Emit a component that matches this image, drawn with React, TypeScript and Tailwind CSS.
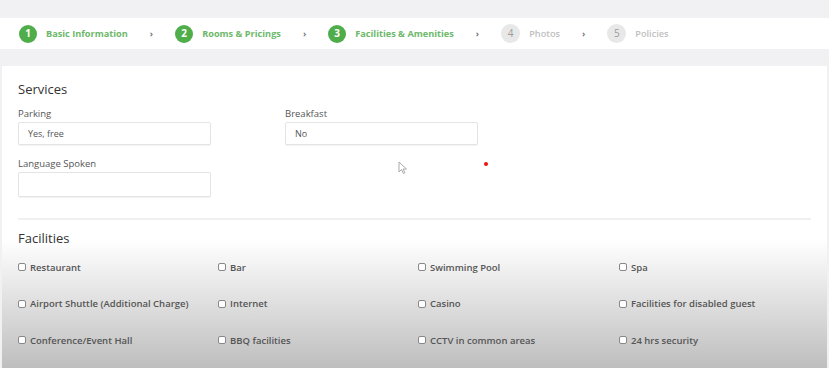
const steps = [
  { n: 1, label: "Basic Information", done: true },
  { n: 2, label: "Rooms & Pricings", done: true },
  { n: 3, label: "Facilities & Amenities", done: true },
  { n: 4, label: "Photos", done: false },
  { n: 5, label: "Policies", done: false },
];

const facilities = [
  "Restaurant",
  "Bar",
  "Swimming Pool",
  "Spa",
  "Airport Shuttle (Additional Charge)",
  "Internet",
  "Casino",
  "Facilities for disabled guest",
  "Conference/Event Hall",
  "BBQ facilities",
  "CCTV in common areas",
  "24 hrs security",
];

function Stepper() {
  return (
    <div className="flex h-[31px] items-center bg-white pl-[19px] font-['Open_Sans',sans-serif]">
      {steps.map((s, i) => (
        <div key={s.n} className="flex items-center">
          <div
            className={
              s.done
                ? "flex h-[18px] w-[18px] items-center justify-center rounded-full bg-[#4fae4a] text-[10px] font-bold text-white"
                : "flex h-[19px] w-[19px] items-center justify-center rounded-full bg-[#e8e8e8] text-[10px] text-[#9c9c9c]"
            }
          >
            {s.n}
          </div>
          <span
            className={
              s.done
                ? "ml-[9px] text-[9.2px] font-bold text-[#6db86a]"
                : "ml-[9px] text-[9.2px] font-semibold text-[#c0c0c0]"
            }
          >
            {s.label}
          </span>
          {i < steps.length - 1 && (
            <span className="mx-[22px] text-[9px] font-bold text-[#777]">›</span>
          )}
        </div>
      ))}
    </div>
  );
}

function Field({ label, value, h }: { label: string; value?: string; h: string }) {
  return (
    <div className="flex w-[193px] flex-col">
      <span className="text-[9.5px] leading-[10px] font-medium text-[#555]">{label}</span>
      <div
        className={`mt-[3px] flex ${h} items-center rounded-[2px] border border-[#e4e4e4] bg-white pl-[9px] text-[9px] text-[#555] shadow-[0_1px_1px_rgba(0,0,0,0.06)]`}
      >
        {value}
      </div>
    </div>
  );
}

export default function App() {
  return (
    <div className="relative h-[368px] w-[829px] overflow-hidden bg-[#f1f1f3] pt-[18px] font-['Open_Sans',sans-serif]">
      <Stepper />
      <div className="mx-[2px] mt-[17px] bg-white">
        <div className="px-[16px] pt-[15px]">
          <h2 className="text-[13px] leading-[16px] font-medium text-[#333]">Services</h2>
          <div className="mt-[12px] flex gap-[74px]">
            <Field label="Parking" value="Yes, free" h="h-[23px]" />
            <Field label="Breakfast" value="No" h="h-[23px]" />
          </div>
          <div className="mt-[14px]">
            <Field label="Language Spoken" h="h-[25px]" />
          </div>
        </div>
        <div className="mt-[21px] bg-[linear-gradient(to_bottom,#ffffff_0px,#ffffff_22px,#bebebe_150px)] px-[16px] pb-[40px]">
          <div className="h-[2px] bg-[#f0f0f0]" />
          <h2 className="mt-[10px] text-[13px] leading-[16px] font-medium text-[#333]">Facilities</h2>
          <div className="mt-[13px] grid grid-cols-[200px_200px_201px_1fr] gap-y-[18.5px]">
            {facilities.map((f) => (
              <label key={f} className="flex h-[18px] items-center text-[9.5px] font-semibold text-[#555]">
                <span className="mr-[4px] mb-[2px] h-[8px] w-[8px] rounded-[2px] border border-[#888] bg-white" />
                {f}
              </label>
            ))}
          </div>
        </div>
      </div>
      {/* mouse cursor and click marker from the recording */}
      <svg className="pointer-events-none absolute left-[398px] top-[161px]" width="10" height="14" viewBox="0 0 10 14">
        <path d="M1 1 L1 11 L3.5 8.5 L5.5 12.5 L7 11.8 L5 8 L8.5 8 Z" fill="white" stroke="#aaa" strokeWidth="1" />
      </svg>
      <div className="pointer-events-none absolute left-[484px] top-[162px] h-[4px] w-[4px] rounded-full bg-[#e11]" />
    </div>
  );
}
